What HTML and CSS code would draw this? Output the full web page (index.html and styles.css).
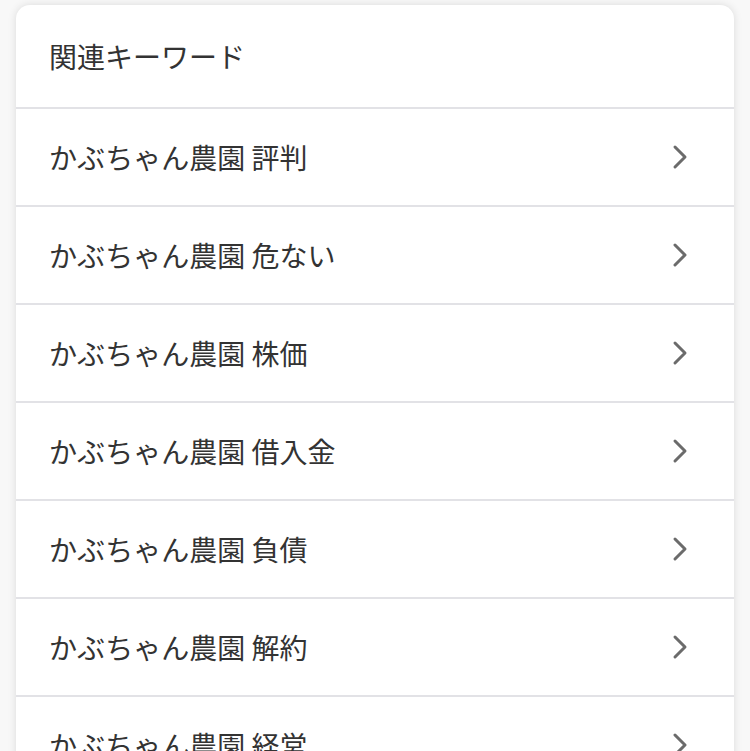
FILE: index.html
```html
<!DOCTYPE html>
<html lang="ja">
<head>
<meta charset="utf-8">
<link rel="stylesheet" href="styles.css">
</head>
<body>
<div class="card">
  <div class="header">関連キーワード</div>
  <ul class="list">
    <li class="row"><span class="label">かぶちゃん農園 評判</span><svg class="chev" viewBox="0 0 16 26"><path d="M3 3 L13 13 L3 23"/></svg></li>
    <li class="row"><span class="label">かぶちゃん農園 危ない</span><svg class="chev" viewBox="0 0 16 26"><path d="M3 3 L13 13 L3 23"/></svg></li>
    <li class="row"><span class="label">かぶちゃん農園 株価</span><svg class="chev" viewBox="0 0 16 26"><path d="M3 3 L13 13 L3 23"/></svg></li>
    <li class="row"><span class="label">かぶちゃん農園 借入金</span><svg class="chev" viewBox="0 0 16 26"><path d="M3 3 L13 13 L3 23"/></svg></li>
    <li class="row"><span class="label">かぶちゃん農園 負債</span><svg class="chev" viewBox="0 0 16 26"><path d="M3 3 L13 13 L3 23"/></svg></li>
    <li class="row"><span class="label">かぶちゃん農園 解約</span><svg class="chev" viewBox="0 0 16 26"><path d="M3 3 L13 13 L3 23"/></svg></li>
    <li class="row"><span class="label">かぶちゃん農園 経営</span><svg class="chev" viewBox="0 0 16 26"><path d="M3 3 L13 13 L3 23"/></svg></li>
  </ul>
</div>
</body>
</html>
```
FILE: styles.css
```css
html, body {
  margin: 0;
  padding: 0;
  background: #f8f8f8;
  height: 751px;
  overflow: hidden;
}
body {
  font-family: "Noto Sans CJK JP", "Noto Sans", sans-serif;
  color: #333333;
}
.card {
  margin: 5px 16px 0 16px;
  background: #ffffff;
  border-radius: 14px;
  box-shadow: 0 0 8px rgba(0, 0, 0, 0.12);
}
.header {
  height: 102px;
  display: flex;
  align-items: center;
  padding-left: 33px;
  font-size: 28px;
  border-bottom: 2px solid #e2e2e6;
  box-sizing: border-box;
  height: 104px;
}
.list {
  list-style: none;
  margin: 0;
  padding: 0;
}
.row {
  height: 98px;
  box-sizing: border-box;
  border-bottom: 2px solid #e2e2e6;
  display: flex;
  align-items: center;
  justify-content: space-between;
  padding: 0 46px 0 33px;
  font-size: 28px;
}
.label {
  white-space: nowrap;
}
.chev {
  width: 16px;
  height: 26px;
  flex: none;
}
.chev path {
  fill: none;
  stroke: #6b6b6b;
  stroke-width: 3;
  stroke-linecap: round;
  stroke-linejoin: round;
}
```
